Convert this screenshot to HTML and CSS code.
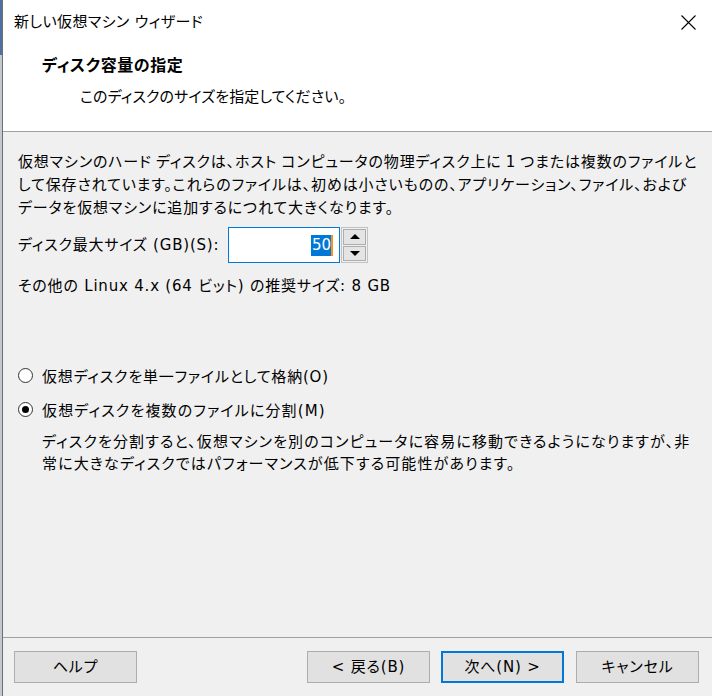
FILE: index.html
```html
<!DOCTYPE html>
<html lang="ja">
<head>
<meta charset="utf-8">
<title>新しい仮想マシン ウィザード</title>
<link rel="stylesheet" href="styles.css">
</head>
<body>
<div class="frame">
  <div class="edge"></div>
  <div class="dialog">
    <div class="titlebar">
      <span class="title">新しい仮想マシン ウィザード</span>
      <svg class="close" width="15" height="15" viewBox="0 0 15 15"><path d="M0.5 0.5 L14.5 14.5 M14.5 0.5 L0.5 14.5" stroke="#000" stroke-width="1.1" fill="none"/></svg>
    </div>
    <div class="header">
      <div class="heading">ディスク容量の指定</div>
      <div class="subheading">このディスクのサイズを指定してください。</div>
    </div>
    <div class="main">
      <p class="intro">仮想マシンのハード ディスクは、ホスト コンピュータの物理ディスク上に 1 つまたは複数のファイルと<br>して保存されています。これらのファイルは、初めは小さいものの、アプリケーション、ファイル、および<br>データを仮想マシンに追加するにつれて大きくなります。</p>
      <div class="size-row">
        <label class="size-label">ディスク最大サイズ (GB)(S):</label>
        <div class="input">
          <span class="sel">50</span><span class="caret"></span>
        </div>
        <div class="spin">
          <div class="spin-btn"><span class="arrow up"></span></div>
          <div class="spin-btn"><span class="arrow down"></span></div>
        </div>
      </div>
      <p class="recommend">その他の Linux 4.x (64 ビット) の推奨サイズ: 8 GB</p>
      <div class="options">
        <div class="radio-row"><span class="radio"></span><span>仮想ディスクを単一ファイルとして格納(O)</span></div>
        <div class="radio-row"><span class="radio checked"></span><span class="wide">仮想ディスクを複数のファイルに分割(M)</span></div>
        <p class="desc">ディスクを分割すると、仮想マシンを別のコンピュータに容易に移動できるようになりますが、非<br>常に大きなディスクではパフォーマンスが低下する可能性があります。</p>
      </div>
    </div>
    <div class="footer">
      <button class="btn">ヘルプ</button>
      <div class="nav">
        <button class="btn">&lt; 戻る(B)</button>
        <button class="btn default">次へ(N) &gt;</button>
        <button class="btn cancel">キャンセル</button>
      </div>
    </div>
  </div>
</div>
</body>
</html>
```

FILE: styles.css
```css
* { box-sizing: border-box; }
html, body {
  margin: 0;
  padding: 0;
  width: 712px;
  height: 696px;
  overflow: hidden;
  background: #f0f0f0;
}
body {
  font-family: "DejaVu Sans", "Noto Sans CJK JP", sans-serif;
  font-size: 15px;
  color: #000;
  font-feature-settings: "palt";
  letter-spacing: 0.8px;
}
.frame {
  display: flex;
  height: 696px;
}
.edge {
  width: 2px;
  flex: none;
  background: linear-gradient(#4f70a3 0, #4f70a3 55px, #c4c9d1 55px);
}
.dialog {
  flex: 1;
  display: flex;
  flex-direction: column;
  border-left: 1px solid #6e6e6e;
  background: #f0f0f0;
}
.titlebar {
  height: 44px;
  flex: none;
  background: #fff;
  display: flex;
  align-items: center;
  justify-content: space-between;
  padding: 0 16px 0 11px;
}
.title {
  line-height: 22px;
  letter-spacing: 0.4px;
}
.close { display: block; }
.header {
  height: 88px;
  flex: none;
  background: #fff;
  border-bottom: 1px solid #a0a0a0;
  padding: 11px 0 0 39px;
}
.heading {
  font-weight: bold;
  font-size: 16px;
  line-height: 22px;
  letter-spacing: 0.6px;
}
.subheading {
  line-height: 22px;
  margin-top: 9px;
  padding-left: 38px;
  letter-spacing: 0.1px;
}
.main {
  flex: 1;
  padding: 19px 0 0 15px;
}
.intro {
  margin: 0;
  line-height: 23px;
  white-space: nowrap;
  letter-spacing: 0.85px;
  word-spacing: -1.5px;
}
.size-row {
  display: flex;
  align-items: center;
  margin-top: 7px;
  height: 36px;
}
.size-label {
  width: 210px;
  flex: none;
  line-height: 23px;
  white-space: nowrap;
}
.input {
  width: 112px;
  height: 36px;
  border: 1px solid #0078d7;
  background: #fff;
  display: flex;
  align-items: center;
  justify-content: flex-end;
  padding-right: 6px;
}
.sel {
  background: #0078d7;
  color: #fff;
  height: 21px;
  line-height: 21px;
  padding: 0 0 0 1px;
  letter-spacing: 0;
}
.caret {
  width: 2px;
  height: 21px;
  background: #f7941d;
}
.spin {
  width: 27px;
  height: 36px;
  margin-left: 1px;
  border: 1px solid #c2c2c2;
  background: #f0f0f0;
  display: flex;
  flex-direction: column;
  gap: 1px;
  padding: 1px;
}
.spin-btn {
  flex: 1;
  background: #e4e4e4;
  border: 1px solid #adadad;
  display: flex;
  align-items: center;
  justify-content: center;
}
.arrow {
  width: 0;
  height: 0;
  border-left: 5px solid transparent;
  border-right: 5px solid transparent;
}
.arrow.up { border-bottom: 5px solid #000; }
.arrow.down { border-top: 5px solid #000; }
.recommend {
  margin: 12px 0 0;
  line-height: 23px;
  white-space: nowrap;
}
.options {
  margin-top: 66px;
}
.radio-row {
  display: flex;
  align-items: center;
  height: 23px;
  margin-bottom: 10.5px;
  gap: 9px;
  white-space: nowrap;
}
.wide { letter-spacing: 1.15px; }
.radio {
  width: 15px;
  height: 15px;
  flex: none;
  border: 1px solid #333;
  border-radius: 50%;
  background: #fff;
  display: flex;
  align-items: center;
  justify-content: center;
}
.radio.checked::after {
  content: "";
  width: 7px;
  height: 7px;
  border-radius: 50%;
  background: #000;
}
.desc {
  margin: 0;
  padding-left: 24px;
  line-height: 22px;
  white-space: nowrap;
  letter-spacing: 1.12px;
}
.footer {
  height: 59px;
  flex: none;
  border-top: 1px solid #a0a0a0;
  display: flex;
  justify-content: space-between;
  padding: 13px 13px 0 11px;
}
.nav {
  display: flex;
  gap: 11px;
}
.btn {
  width: 123px;
  height: 32px;
  background: #e1e1e1;
  border: 1px solid #adadad;
  font: inherit;
  color: #000;
  padding: 0;
  margin: 0;
  line-height: 22px;
  letter-spacing: 0.8px;
  font-feature-settings: "palt";
}
.btn.default {
  border: 2px solid #0078d7;
}
.btn.cancel { margin-left: 1px; }
```
